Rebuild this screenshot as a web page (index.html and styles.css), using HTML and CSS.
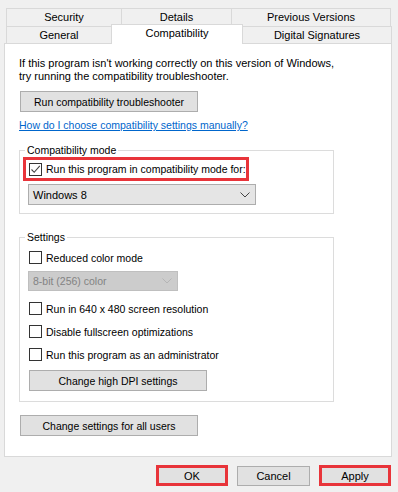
FILE: index.html
```html
<!DOCTYPE html>
<html lang="en">
<head>
    <meta charset="utf-8" />
    <link rel="stylesheet" href="styles.css">
</head>
<body>
    <div class="tabs">
        <div class="tab-row">
            <div class="tab tab-security">Security</div>
            <div class="tab tab-details">Details</div>
            <div class="tab tab-previous">Previous Versions</div>
        </div>
        <div class="tab-row">
            <div class="tab tab-general">General</div>
            <div class="tab tab-compat active">Compatibility</div>
            <div class="tab tab-digital">Digital Signatures</div>
        </div>
    </div>

    <div class="panel">
        <p class="intro">If this program isn't working correctly on this version of Windows,<br>try running the compatibility troubleshooter.</p>
        <button class="btn btn-wide">Run compatibility troubleshooter</button>
        <a href="#" class="help-link">How do I choose compatibility settings manually?</a>

        <fieldset class="group group-compat">
            <legend>Compatibility mode</legend>
            <label class="check highlight">
                <span class="box checked">
                    <svg width="11" height="11" viewBox="0 0 11 11"><path d="M1.5 5.5 L4.2 8.3 L9.8 1.8" fill="none" stroke="#444" stroke-width="1.1"/></svg>
                </span>
                Run this program in compatibility mode for:
            </label>
            <div class="select select-os">
                <span>Windows 8</span>
                <svg class="chev" width="10" height="6" viewBox="0 0 10 6"><path d="M0.5 0.5 L5 5 L9.5 0.5" fill="none" stroke="#444" stroke-width="1"/></svg>
            </div>
        </fieldset>

        <fieldset class="group group-settings">
            <legend>Settings</legend>
            <label class="check"><span class="box"></span>Reduced color mode</label>
            <div class="select select-color disabled">
                <span>8-bit (256) color</span>
                <svg class="chev" width="10" height="6" viewBox="0 0 10 6"><path d="M0.5 0.5 L5 5 L9.5 0.5" fill="none" stroke="#b5b5b5" stroke-width="1"/></svg>
            </div>
            <label class="check spaced"><span class="box"></span>Run in 640 x 480 screen resolution</label>
            <label class="check"><span class="box"></span>Disable fullscreen optimizations</label>
            <label class="check"><span class="box"></span>Run this program as an administrator</label>
            <button class="btn btn-dpi">Change high DPI settings</button>
        </fieldset>

        <button class="btn btn-wide btn-all">Change settings for all users</button>
    </div>

    <div class="actions">
        <button class="btn btn-action highlight-btn">OK</button>
        <button class="btn btn-action btn-cancel">Cancel</button>
        <button class="btn btn-action highlight-btn">Apply</button>
    </div>
</body>
</html>
```

FILE: styles.css
```css
:root {
    --window-bg: #f0f0f0;
    --tab-border: #d9d9d9;
    --group-border: #dcdcdc;
    --button-bg: #e1e1e1;
    --button-border: #adadad;
    --link-color: #0066cc;
    --mark-red: #e8343a;
    --font-family: 'Liberation Sans', Arial, sans-serif;
}

* {
    box-sizing: border-box;
}

body {
    margin: 0;
    background-color: var(--window-bg);
    font-family: var(--font-family);
    font-size: 10.5px;
    color: #000;
}

/* tabs */
.tabs {
    padding: 8px 0 0 6px;
    font-size: 11px;
}

.tab-row {
    display: flex;
}

.tab {
    height: 18px;
    line-height: 17px;
    text-align: center;
    border: 1px solid var(--tab-border);
    border-bottom: none;
    margin-left: -1px;
    background-color: var(--window-bg);
}

.tab-row .tab:first-child {
    margin-left: 0;
}

.tab-security { width: 116px; }
.tab-details { width: 111px; }
.tab-previous { width: 160px; }
.tab-general { width: 106px; }
.tab-compat { width: 132px; }
.tab-digital { width: 150px; }

.tab-row + .tab-row .tab {
    height: 17px;
    line-height: 16px;
}

.tab-row + .tab-row .tab.active {
    position: relative;
    z-index: 1;
    height: 20px;
    margin-top: -2px;
    margin-bottom: -1px;
    line-height: 17px;
    background-color: #fff;
}

/* panel */
.panel {
    margin: 0 6px 0 4px;
    height: 414px;
    background-color: #fff;
    border: 1px solid var(--tab-border);
    padding: 13px 14px 0 14px;
}

.intro {
    margin: 0;
    font-size: 11px;
    line-height: 13px;
}

.btn {
    display: block;
    font-family: var(--font-family);
    font-size: 10.5px;
    color: #000;
    background-color: var(--button-bg);
    border: 1px solid var(--button-border);
    padding: 0;
    height: 21px;
}

.btn-wide {
    width: 178px;
    margin: 8px 0 0 1px;
}

.help-link {
    display: block;
    margin-top: 7px;
    line-height: 13px;
    color: var(--link-color);
    text-decoration: underline;
    width: max-content;
}

/* group boxes */
.group {
    margin: 12px 0 0 0;
    width: 315px;
    border: 1px solid var(--group-border);
    padding: 0 8px 8px 8px;
    min-width: 0;
}

.group legend {
    padding: 0 2px;
    margin-left: -3px;
    line-height: 13px;
    color: #000;
}

.group-settings {
    margin-top: 17px;
    padding-top: 2px;
    padding-bottom: 10px;
}

.check {
    display: flex;
    align-items: center;
    height: 23px;
    white-space: nowrap;
}

.box {
    display: inline-flex;
    align-items: center;
    justify-content: center;
    width: 13px;
    height: 13px;
    border: 1px solid #333;
    background-color: #fff;
    margin: 0 4px 0 1px;
    flex-shrink: 0;
}

.check.highlight {
    width: 226px;
    height: 24px;
    margin-left: -5px;
    border: 3px solid var(--mark-red);
    padding-left: 3px;
}

.check.highlight .box {
    margin-left: 0;
}

.select {
    display: flex;
    align-items: center;
    justify-content: space-between;
    height: 21px;
    padding: 0 5px 0 4px;
    border: 1px solid #adadad;
    background-color: #e5e5e5;
}

.select-os {
    width: 228px;
    margin-top: 3px;
    font-size: 11px;
}

.select-color {
    width: 150px;
    height: 20px;
    margin-top: 2px;
}

.select.disabled {
    background-color: #cccccc;
    border-color: #bfbfbf;
    color: #838383;
}

.check.spaced {
    margin-top: 6px;
}

.btn-dpi {
    width: 178px;
    margin: 4px 0 0 1px;
}

.btn-all {
    margin-top: 13px;
}

/* dialog buttons */
.actions {
    display: flex;
    justify-content: flex-end;
    gap: 9px;
    padding: 8px 7px 0 0;
}

.btn-action {
    width: 72px;
    height: 21px;
    font-size: 11px;
}

.btn-cancel {
    width: 73px;
    height: 20px;
    margin-top: 1px;
}

.highlight-btn {
    border: 3px solid var(--mark-red);
}
```
